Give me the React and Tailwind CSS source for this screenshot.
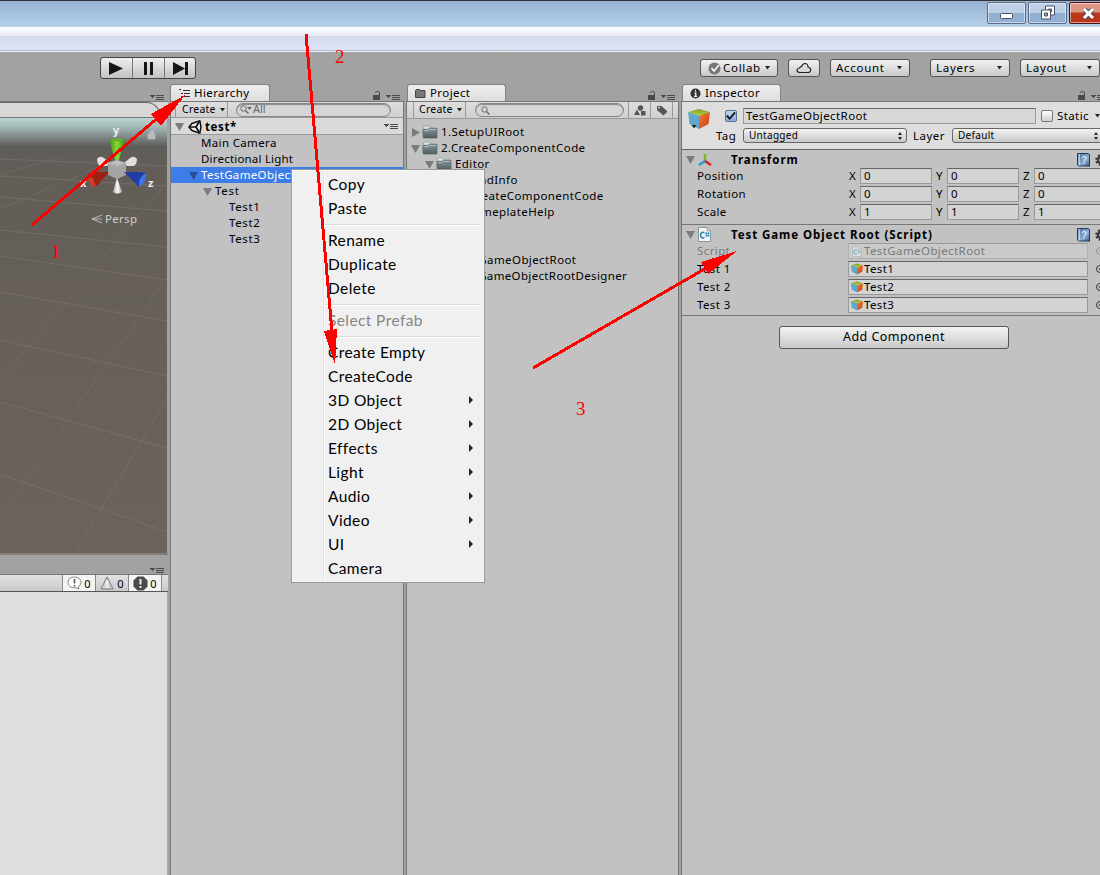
import { clsx } from "clsx";

const menuItems = [
  { label: "Copy" },
  { label: "Paste" },
  { sep: true },
  { label: "Rename" },
  { label: "Duplicate" },
  { label: "Delete" },
  { sep: true },
  { label: "Select Prefab", disabled: true },
  { sep: true },
  { label: "Create Empty" },
  { label: "CreateCode" },
  { label: "3D Object", sub: true },
  { label: "2D Object", sub: true },
  { label: "Effects", sub: true },
  { label: "Light", sub: true },
  { label: "Audio", sub: true },
  { label: "Video", sub: true },
  { label: "UI", sub: true },
  { label: "Camera" },
];

const transformRows = [
  { label: "Position", value: 0 },
  { label: "Rotation", value: 0 },
  { label: "Scale", value: 1 },
];

// ---------- icons ----------

function PanelMenuIcon({ className }) {
  return (
    <svg width="14" height="7" viewBox="0 0 14 7" className={clsx("shrink-0", className)} shapeRendering="crispEdges">
      <path d="M0 1h5L2.500 4z" fill="#4a4a4a" />
      <path d="M6 1.500h8M6 3.500h8M6 5.500h8" stroke="#4a4a4a" />
    </svg>
  );
}

function LockIcon({ color = "#4a4a4a", className }) {
  return (
    <svg width="8" height="9" viewBox="0 0 8 9" className={clsx("shrink-0", className)}>
      <path d="M2.500 2V1.200Q3 .5 4 .5h.8Q6.500.6 6.500 2v3" fill="none" stroke={color} />
      <rect x="0" y="4" width="7" height="5" fill={color} />
    </svg>
  );
}

function Foldout({ open = true, color = "#7b7b7b" }) {
  return (
    <svg width="9" height="9" viewBox="0 0 9 9" className="shrink-0">
      <path d={open ? "M0 1h9L4.500 9z" : "M1 0v9L9 4.500z"} fill={color} />
    </svg>
  );
}

function FolderIcon() {
  return (
    <svg width="16" height="14" viewBox="0 0 16 14" className="shrink-0">
      <defs>
        <linearGradient id="folder" x1="0" y1="0" x2="0" y2="1">
          <stop offset="0" stopColor="#87969a" />
          <stop offset="1" stopColor="#4c5b5e" />
        </linearGradient>
      </defs>
      <path d="M1.500 4V2L2.500 1h4l1 1.500h6V5z" fill="#dfe3e3" stroke="#8d9899" strokeWidth=".7" />
      <path d="M.7 4.500h5L7 3.500h8v9.500H1.200z" fill="url(#folder)" stroke="#56686b" strokeWidth=".7" />
      <path d="M1.500 5.500H6L7.500 4.500H14" stroke="#b9c3c4" strokeWidth=".8" fill="none" />
    </svg>
  );
}

function CubeIcon({ size, className }) {
  return (
    <svg width={size} height={size} viewBox="0 0 22 22" className={clsx("shrink-0", className)}>
      <defs>
        <linearGradient id="cubeRight" x1="0" y1="0" x2="1" y2="1">
          <stop offset="0" stopColor="#f0803a" />
          <stop offset="1" stopColor="#c93a10" />
        </linearGradient>
        <linearGradient id="cubeTop" x1="0" y1="0" x2="0" y2="1">
          <stop offset="0" stopColor="#7f9a28" />
          <stop offset="1" stopColor="#b5d84a" />
        </linearGradient>
      </defs>
      <path d="M0 4L11 7v14L1.500 16z" fill="#62a8cc" />
      <path d="M22 4L11 7v14l9.500-5z" fill="url(#cubeRight)" />
      <path d="M0 4L11 1 22 4 11 8z" fill="url(#cubeTop)" />
    </svg>
  );
}

function ScriptIcon({ className }) {
  return (
    <svg width="13" height="15" viewBox="0 0 13 15" className={clsx("shrink-0", className)}>
      <path d="M.5.5h8.500l3.500 3.500v10.500H.5z" fill="#f3f6f7" stroke="#8b9498" />
      <path d="M9 .5V4h3.500" fill="#cfd6d8" stroke="#8b9498" strokeWidth=".7" />
      <path d="M6.500 5.700Q3 4.200 2.500 8q.3 3.800 4 2.500" fill="none" stroke="#2a86b4" strokeWidth="1.600" />
      <path d="M8.400 5v5M10.400 5v5M7.200 6.500h4.300M7.200 8.700h4.300" stroke="#2a86b4" strokeWidth=".8" />
    </svg>
  );
}

function HelpIcon() {
  return (
    <svg width="13" height="14" viewBox="0 0 13 14" className="shrink-0">
      <defs>
        <linearGradient id="book" x1="0" y1="0" x2="1" y2="1">
          <stop offset="0" stopColor="#4a6f9f" />
          <stop offset=".6" stopColor="#8fb0d8" />
          <stop offset="1" stopColor="#34527d" />
        </linearGradient>
      </defs>
      <path d="M.5.5H11l1.500 1v12l-1-.5H2L.5 12z" fill="url(#book)" stroke="#233b60" />
      <path d="M2.200 1v11.500" stroke="#dce8f5" />
      <path d="M5.500 5q0-1.500 1.800-1.500T9 5q0 1-1.700 2v.8M7.300 9v1.300" fill="none" stroke="#fff" strokeWidth="1" />
    </svg>
  );
}

function GearIcon() {
  return (
    <svg width="12" height="12" viewBox="0 0 12 12" className="shrink-0">
      <circle cx="6" cy="6" r="3" fill="none" stroke="#333" strokeWidth="2" />
      <circle cx="6" cy="6" r="4.800" fill="none" stroke="#333" strokeWidth="2" strokeDasharray="2 1.770" />
    </svg>
  );
}

function SearchIcon({ arrow }) {
  return (
    <svg width="13" height="9" viewBox="0 0 13 9" className="shrink-0">
      <circle cx="3.500" cy="3.500" r="2.700" fill="none" stroke="#6a6a6a" />
      <path d="M5.500 5.500L8.500 8.500" stroke="#6a6a6a" strokeWidth="1.400" />
      {arrow && <path d="M7 2h5L9.500 5z" fill="#6a6a6a" />}
    </svg>
  );
}

function UnityIcon() {
  return (
    <svg width="14" height="14" viewBox="0 0 14 14" className="shrink-0">
      <path d="M1 7L4 3.500 11.800.9 13 7l-1.200 6.100L4 10.500z" fill="#eee" stroke="#111" strokeWidth="1.500" />
      <path d="M1 7h7M8 7l3.500-6M8 7l3.500 6" stroke="#111" strokeWidth="1.700" fill="none" />
    </svg>
  );
}

function Caret({ className }) {
  return (
    <svg width="5" height="4" viewBox="0 0 5 4" className={clsx("shrink-0", className)}>
      <path d="M0 0h5L2.500 3.500z" fill="#222" />
    </svg>
  );
}

function UpDown() {
  return (
    <svg width="4" height="8" viewBox="0 0 4 8" className="shrink-0">
      <path d="M0 3L2 0l2 3zM0 5l2 3 2-3z" fill="#222" />
    </svg>
  );
}

// ---------- building blocks ----------

function ToolbarButton({ small, className, children }) {
  return (
    <div
      className={clsx(
        "flex shrink-0 items-center rounded-[3px] border bg-linear-to-b from-[#f2f2f2] to-[#c9c9c9]",
        small ? "h-[15px] border-[#666] text-[10px] tracking-[0.3px]" : "h-[18px] border-[#555] text-[11.5px] tracking-[0.7px]",
        className
      )}
    >
      {children}
    </div>
  );
}

function Tab({ icon, label, className }) {
  return (
    <div className={clsx("flex h-[17px] shrink-0 items-center rounded-t-[3px] border border-b-0 border-[#828282] bg-linear-to-b from-[#ededed] to-[#dedede] text-[11.5px] tracking-[0.4px]", className)}>
      {icon}
      {label}
    </div>
  );
}

function PanelTools({ className }) {
  return (
    <div className={clsx("ml-auto flex h-full items-end", className)}>
      <LockIcon className="mr-[5px] mb-[1px]" />
      <PanelMenuIcon />
    </div>
  );
}

function SearchField({ className, children }) {
  return (
    <div className={clsx("flex h-[14px] shrink-0 items-center rounded-full border border-[#858585] bg-[#d5d5d5] shadow-[inset_0_1px_1px_#888]", className)}>
      {children}
    </div>
  );
}

function NumberField({ axis, value, className }) {
  return (
    <div className={clsx("flex shrink-0 items-center", className)}>
      <span className="w-[11px] shrink-0">{axis}</span>
      <span className="h-[16px] w-[72px] shrink-0 border border-[#999] border-t-[#666] bg-[#d3d3d3] pl-[3px] leading-[14px]">{value}</span>
    </div>
  );
}

function ObjectField({ label, value, script }) {
  return (
    <div className={clsx("flex h-[18px] items-center", script && "text-[#7a7a7a]")}>
      <span className="w-[151px] shrink-0">{label}</span>
      <div className={clsx("flex h-[16px] w-[240px] shrink-0 items-center gap-[1px] border pl-[2px]", script ? "border-[#b0b0b0] border-t-[#999] bg-[#cacaca]" : "border-[#999] border-t-[#666] bg-[#d3d3d3]")}>
        {script ? <ScriptIcon className="h-[11px] w-[12px] opacity-40" /> : <CubeIcon size={12} />}
        <span>{value}</span>
      </div>
      <svg width="10" height="10" viewBox="0 0 10 10" className="ml-[7px] shrink-0">
        <circle cx="5" cy="5" r="3.500" fill="none" stroke={script ? "#999" : "#333"} />
        <circle cx="5" cy="5" r="1" fill={script ? "#999" : "#333"} />
      </svg>
    </div>
  );
}

// ---------- window chrome ----------

function TitleBar() {
  const btn = "flex h-[22px] w-[39px] shrink-0 items-center justify-center rounded-[2px] border shadow-[inset_0_0_0_1px_rgba(255,255,255,0.5)]";
  const blue = "border-[#5b6c8a] bg-linear-to-b from-[#bdd0e6] from-50% to-[#92aed0] to-50%";
  return (
    <div className="shrink-0">
      <div className="flex h-[27px] justify-end gap-[2px] overflow-hidden border-t border-[#333] bg-linear-to-b from-[#95b1d1] to-[#b7d1ea] pt-[1px]">
        <div className={clsx(btn, blue)}>
          <svg width="14" height="6" className="mt-[5px]"><rect x=".5" y=".5" width="12" height="5" rx="1" fill="#fff" stroke="#4a5364" /></svg>
        </div>
        <div className={clsx(btn, blue)}>
          <svg width="16" height="16" viewBox="0 0 16 16">
            <path d="M5.500 1h9v9h-9z" fill="#fff" stroke="#4a5364" />
            <path d="M8.500 4h3v3h-3z" fill="#a9bdd8" stroke="#4a5364" />
            <path d="M1.500 5h9v9h-9z" fill="#fff" stroke="#4a5364" />
            <path d="M4.500 8h3v3h-3z" fill="#92aed0" stroke="#4a5364" />
          </svg>
        </div>
        <div className={clsx(btn, "-mr-[8px] border-[#4d1218] bg-linear-to-b from-[#dd9483] from-45% to-[#b9351c] to-50%")}>
          <svg width="15" height="13" viewBox="0 0 15 13">
            <path d="M3.500 2.500l8 8M11.500 2.500l-8 8" stroke="#4a5364" strokeWidth="5" />
            <path d="M3 2l9 9M12 2l-9 9" stroke="#fff" strokeWidth="3" />
          </svg>
        </div>
      </div>
      <div className="h-[9px] bg-linear-to-b from-white to-[#e7eaf4]" />
      <div className="h-[14px] bg-linear-to-b from-[#d3d9ed] to-[#dfe3f4]" />
      <div className="h-px bg-[#b5b9cc]" />
      <div className="h-px bg-[#eee]" />
    </div>
  );
}

function Toolbar() {
  return (
    <div className="flex h-[32px] shrink-0 bg-[#a2a2a2]">
      <div className="mt-[5px] ml-[100px] flex h-[22px] w-[96px] shrink-0 rounded-[3px] border border-[#444] bg-linear-to-b from-[#efefef] to-[#c2c2c2]">
        <svg width="94" height="20" viewBox="0 0 94 20">
          <path d="M31.500 0v20M63.500 0v20" stroke="#777" />
          <path d="M8 4v13l14-6.500z" fill="#151515" />
          <path d="M43 4h3v13h-3zM49 4h3v13h-3z" fill="#151515" />
          <path d="M72 4v13l12-6.500zM84 4h3v13h-3z" fill="#151515" />
        </svg>
      </div>
      <div className="mt-[7px] ml-auto flex">
        <ToolbarButton className="mr-[10px] w-[78px] pl-[7px]">
          <svg width="13" height="13" viewBox="0 0 13 13" className="mr-[2px] shrink-0">
            <circle cx="6.500" cy="6.500" r="6" fill="#777" />
            <path d="M3.500 6l2.500 3 5-6" fill="none" stroke="#fff" strokeWidth="1.500" />
          </svg>
          Collab
          <Caret className="mr-[7px] ml-auto" />
        </ToolbarButton>
        <ToolbarButton className="mr-[10px] w-[32px] justify-center">
          <svg width="16" height="12" viewBox="0 0 16 12">
            <path d="M3.500 10.500Q.8 10 1 8q.3-2 2.500-2Q4 4.500 5.500 4.700 6.500 1.500 9 1.500q3 .2 3 3.500 2.700.5 2.700 3 0 2-2 2.500z" fill="none" stroke="#222" strokeWidth="1.200" />
          </svg>
        </ToolbarButton>
        <ToolbarButton className="mr-[20px] w-[80px] justify-between pr-[7px] pl-[5px]">Account<Caret /></ToolbarButton>
        <ToolbarButton className="mr-[10px] w-[80px] justify-between pr-[7px] pl-[5px]">Layers<Caret /></ToolbarButton>
        <ToolbarButton className="w-[80px] justify-between pr-[7px] pl-[5px]">Layout<Caret /></ToolbarButton>
      </div>
    </div>
  );
}

// ---------- scene view ----------

function SceneGrid() {
  return (
    <svg width="167" height="435" viewBox="0 0 167 435" className="shrink-0">
      <defs>
        <linearGradient id="sky" x1="0" y1="0" x2="0" y2="1">
          <stop offset="0" stopColor="#bcd4d3" />
          <stop offset=".02" stopColor="#a5b9b9" />
          <stop offset=".045" stopColor="#7d8685" />
          <stop offset=".065" stopColor="#5f5d5a" />
          <stop offset=".12" stopColor="#635d58" />
          <stop offset="1" stopColor="#6b635d" />
        </linearGradient>
        <linearGradient id="whiteCone" x1="0" y1="0" x2="1" y2="0">
          <stop offset="0" stopColor="#a9a9ab" />
          <stop offset=".5" stopColor="#fafafa" />
          <stop offset="1" stopColor="#a9a9ab" />
        </linearGradient>
        <linearGradient id="greenCone" x1="0" y1="0" x2="1" y2="0">
          <stop offset="0" stopColor="#3f8a12" />
          <stop offset=".5" stopColor="#86dc38" />
          <stop offset="1" stopColor="#3f8a12" />
        </linearGradient>
      </defs>
      <rect width="167" height="435" fill="url(#sky)" />
      <g fill="none" stroke="#8b857f" strokeOpacity=".4">
        <path d="M0 41L167 48M0 58L167 68M0 79L167 93M0 112L167 129M0 138L167 162M0 174L167 203M0 222L167 258M0 284L167 330M0 356L167 414" />
        <path d="M60 40L0 56M115 42L0 91M167 65L0 262M167 159L0 400M167 280L75 435" strokeOpacity=".3" />
      </g>
      <g>
        <path d="M97 41q3-4 7-1l6 5-3 3-7 0q-3-2-3-7zM137 41q-3-4-7-1l-6 5 3 3 7 0q3-2 3-7z" fill="#dedede" />
        <path d="M108 45l9-3 9 3v12l-9 4-9-4z" fill="#a5a5a7" />
        <path d="M108 45l9-3 9 3-9 3z" fill="#bdbdbf" />
        <path d="M109 22q8-3 16 0l-6 20h-4z" fill="url(#greenCone)" />
        <path d="M109 22q8-3 16 0-8 3-16 0z" fill="#5fb321" />
        <path d="M88 56l5-2 16 0-12 14-4-1q-5-4-5-11z" fill="#9a2113" />
        <path d="M88 57q5 0 8 11l-3 1q-5-4-5-12z" fill="#cc3d2a" />
        <path d="M124 54h16l6 1-7 14z" fill="#1f3fa6" />
        <path d="M146 55q1 9-7 14-1-10 7-14z" fill="#3f76ee" />
        <path d="M117 60l5 14q-5 3-9 0z" fill="url(#whiteCone)" />
        <path d="M102 94l-10 4 10 4M92 98h10" fill="none" stroke="#cfcfcf" strokeWidth=".8" transform="translate(0 3)" />
        <path d="M148 16h7v5h-7zM150 16v-3h4v3" fill="#bdbdbd" stroke="#bdbdbd" strokeWidth=".6" />
      </g>
      <g fontFamily="Noto Sans" fontWeight="bold" fontSize="11" fill="#eee">
        <text x="113" y="16">y</text>
        <text x="80" y="69">x</text>
        <text x="148" y="69">z</text>
      </g>
      <text x="105" y="105" fontFamily="Noto Sans" fontSize="11.500" letterSpacing=".3" fill="#cfcfcf">Persp</text>
    </svg>
  );
}

function ScenePanel() {
  return (
    <div className="flex w-[168px] shrink-0 flex-col">
      <div className="flex h-[17px] shrink-0 items-end justify-end pr-[4px]"><PanelMenuIcon /></div>
      <div className="h-[17px] shrink-0 border-y border-[#777] bg-[#d8d8d8] pr-[8px]">
        <div className="h-[13px] rounded-tr-full border-t border-r border-[#666]" />
      </div>
      <SceneGrid />
      <div className="h-[2px] shrink-0 bg-[#85807b]" />
      <div className="flex h-[19px] shrink-0 items-end justify-end bg-[#a2a2a2] pr-[4px]"><PanelMenuIcon /></div>
      <div className="flex h-[18px] shrink-0 justify-end border-y border-[#777] border-b-[#555] bg-linear-to-b from-[#e2e2e2] to-[#c9c9c9] pr-[6px] text-[11px] leading-[17px]">
        <div className="flex w-[33px] items-center justify-center gap-[2px] border-l border-[#888] bg-[#f4f4f4]">
          <svg width="15" height="14" viewBox="0 0 15 14">
            <path d="M7.500 1Q14 1.500 14 6.500q-.2 3-3 4.500l1 2-3.500-1.300Q1 12 1 6.500 1.500 1 7.500 1z" fill="#fff" stroke="#888" />
            <path d="M7.500 3v4.500M7.500 9v1.500" stroke="#555" strokeWidth="1.600" />
          </svg>0
        </div>
        <div className="flex w-[33px] items-center justify-center gap-[3px] border-l border-[#888]">
          <svg width="14" height="14" viewBox="0 0 14 14">
            <path d="M7 1l6 12H1z" fill="#d5d5d5" stroke="#777" strokeLinejoin="round" />
            <path d="M7 4.500V9M7 10v1.500" stroke="#fff" strokeWidth="1.600" />
          </svg>0
        </div>
        <div className="flex w-[34px] items-center justify-center gap-[2px] border-x border-[#888] bg-[#f4f4f4]">
          <svg width="15" height="15" viewBox="0 0 15 15">
            <path d="M4.500.5h6l4 4v6l-4 4h-6l-4-4v-6z" fill="#4a4a4a" />
            <path d="M7.500 3v5.500M7.500 10v2" stroke="#eee" strokeWidth="2" />
          </svg>0
        </div>
      </div>
      <div className="flex-1 border-r border-[#aaa] bg-[#dedede]" />
    </div>
  );
}

// ---------- hierarchy ----------

function HierarchyPanel() {
  const row = "flex h-[16px] items-center gap-[3px]";
  return (
    <div className="ml-[2px] flex w-[234px] shrink-0 flex-col">
      <div className="flex h-[17px] shrink-0">
        <Tab
          className="w-[100px] gap-[3px] pl-[8px]"
          label="Hierarchy"
          icon={
            <svg width="12" height="9" viewBox="0 0 12 9" shapeRendering="crispEdges">
              <path d="M0 .5h2M4 1.500h7M2 4.500h2M5 4.500h6M2 7.500h2M5 7.500h6" stroke="#333" />
            </svg>
          }
        />
        <PanelTools className="pr-[4px]" />
      </div>
      <div className="flex flex-1 flex-col border-x border-t border-[#777] bg-[#c2c2c2]">
        <div className="flex h-[16px] shrink-0 items-center border-b border-[#999] bg-linear-to-b from-[#dedede] to-[#cfcfcf] pl-[4px]">
          <div className="flex h-full w-[53px] items-center gap-[4px] border-x border-[#999] pl-[6px] text-[10.5px] tracking-[0.25px]">
            Create<Caret />
          </div>
          <SearchField className="ml-[8px] w-[155px] gap-0 pl-[3px] text-[11px] text-[#666]">
            <SearchIcon arrow />All
          </SearchField>
        </div>
        <div className="flex h-[17px] shrink-0 items-center border-b border-[#999] bg-[#dadada] pt-px pr-[5px] pl-[4px] text-[11.5px] font-bold tracking-[0.6px]">
          <Foldout />
          <div className="ml-[4px]"><UnityIcon /></div>
          <span className="ml-[3px]">test*</span>
          <PanelMenuIcon className="ml-auto" />
        </div>
        <div className="text-[11.5px] tracking-[0.35px]">
          <div className={clsx(row, "pl-[30px]")}>Main Camera</div>
          <div className={clsx(row, "pl-[30px] tracking-[0.2px]")}>Directional Light</div>
          <div className={clsx(row, "bg-[#3d7de7] pl-[18px] text-white")}><Foldout color="#274f94" />TestGameObjectRoot</div>
          <div className={clsx(row, "pl-[32px] tracking-[0.7px]")}><Foldout />Test</div>
          <div className={clsx(row, "pl-[58px] tracking-[0.6px]")}>Test1</div>
          <div className={clsx(row, "pl-[58px] tracking-[0.6px]")}>Test2</div>
          <div className={clsx(row, "pl-[58px] tracking-[0.6px]")}>Test3</div>
        </div>
      </div>
    </div>
  );
}

// ---------- project ----------

function ProjectPanel() {
  const row = "flex h-[16px] items-center gap-[2px]";
  return (
    <div className="ml-[2px] flex w-[273px] shrink-0 flex-col">
      <div className="flex h-[17px] shrink-0">
        <Tab
          className="ml-px w-[99px] gap-[4px] pl-[7px]"
          label="Project"
          icon={
            <svg width="11" height="9" viewBox="0 0 11 9">
              <path d="M.5 1.500L1.500.5h3l1 1h4.500v7H.5z" fill="#777" stroke="#444" />
            </svg>
          }
        />
        <PanelTools className="pr-[4px]" />
      </div>
      <div className="flex flex-1 flex-col border-x border-t border-[#777] bg-[#c2c2c2]">
        <div className="flex h-[17px] shrink-0 items-center border-b border-[#999] bg-linear-to-b from-[#dedede] to-[#cfcfcf] pl-[6px]">
          <div className="flex h-full w-[53px] items-center gap-[4px] border-x border-[#999] pl-[5px] text-[10.5px] tracking-[0.25px]">
            Create<Caret />
          </div>
          <SearchField className="ml-[9px] w-[149px] pl-[5px]"><SearchIcon /></SearchField>
          <div className="ml-[4px] flex h-full w-[23px] items-center justify-center border-x border-[#999]">
            <svg width="12" height="11" viewBox="0 0 12 11">
              <path d="M0 10L3 4.500 6 10z" fill="#555" />
              <circle cx="6.500" cy="3" r="2.700" fill="#555" />
              <rect x="7" y="6" width="4.500" height="4.500" fill="#555" />
            </svg>
          </div>
          <div className="flex h-full w-[22px] items-center justify-center border-r border-[#999]">
            <svg width="12" height="11" viewBox="0 0 12 11">
              <path d="M1 1h4.500L11.500 6.500 7.500 10.500 1 5z" fill="#555" />
              <circle cx="3" cy="2.700" r=".9" fill="#ddd" />
            </svg>
          </div>
        </div>
        <div className="pt-[5px] text-[11.5px] tracking-[0.4px]">
          <div className={clsx(row, "pl-[4px]")}><Foldout open={false} /><FolderIcon /><span className="pl-px">1.SetupUIRoot</span></div>
          <div className={clsx(row, "pl-[4px]")}><Foldout /><FolderIcon /><span className="pl-px">2.CreateComponentCode</span></div>
          <div className={clsx(row, "pl-[18px]")}><Foldout /><FolderIcon /><span className="pl-px">Editor</span></div>
          <div className={clsx(row, "pl-[61px]")}>BindInfo</div>
          <div className={clsx(row, "pl-[62px]")}>CreateComponentCode</div>
          <div className={clsx(row, "pl-[58px]")}>NameplateHelp</div>
          <div className="h-[32px]" />
          <div className={clsx(row, "pl-[48px]")}>TestGameObjectRoot</div>
          <div className={clsx(row, "pl-[48px] tracking-[0.35px]")}>TestGameObjectRootDesigner</div>
        </div>
      </div>
    </div>
  );
}

// ---------- inspector ----------

function InspectorPanel() {
  return (
    <div className="ml-[2px] flex w-[419px] shrink-0 flex-col overflow-hidden">
      <div className="flex h-[17px] shrink-0">
        <Tab
          className="ml-px w-[99px] gap-[4px] pl-[7px]"
          label="Inspector"
          icon={
            <svg width="11" height="11" viewBox="0 0 11 11">
              <circle cx="5.500" cy="5.500" r="5" fill="#333" />
              <path d="M5.500 2v1.500M4.300 5h1.500v3M4 8.300h3" stroke="#fff" strokeWidth="1.200" fill="none" />
            </svg>
          }
        />
        <PanelTools className="-mr-[5px]" />
      </div>
      <div className="flex flex-1 flex-col border-t border-l border-[#777] bg-[#c2c2c2] text-[11.5px] tracking-[0.4px]">
        <div className="flex h-[48px] shrink-0 border-b border-[#666] bg-[#dedede] pt-[4px] pl-[6px]">
          <div className="w-[27px] shrink-0">
            <CubeIcon size={22} className="mt-[2px]" />
            <Caret className="-mt-[5px] ml-[2px] w-[8px]" />
          </div>
          <div className="ml-px shrink-0">
            <div className="flex h-[19px] items-center">
              <div className="ml-[9px] flex h-[12px] w-[12px] items-center justify-center rounded-[2px] border border-[#5c6f8c] bg-linear-to-b from-[#c4d6ee] to-[#86aadc]">
                <svg width="11" height="10" viewBox="0 0 11 10"><path d="M1 4.500L4 8l6-7" fill="none" stroke="#111" strokeWidth="2" /></svg>
              </div>
              <div className="ml-[6px] h-[16px] w-[293px] border border-[#999] border-t-[#666] bg-[#d8d8d8] pl-[2px] leading-[14px]">TestGameObjectRoot</div>
              <div className="ml-[5px] h-[12px] w-[12px] rounded-[2px] border border-[#777] bg-linear-to-b from-white to-[#d0d0d0]" />
              <span className="ml-[4px]">Static</span>
              <Caret className="ml-[5px] w-[7px]" />
            </div>
            <div className="mt-px flex h-[19px] items-center">
              <span className="w-[27px]">Tag</span>
              <ToolbarButton small className="w-[164px] justify-between pr-[4px] pl-[5px]">Untagged<UpDown /></ToolbarButton>
              <span className="ml-[6px] w-[39px] tracking-[0.5px]">Layer</span>
              <ToolbarButton small className="w-[151px] justify-between pr-[4px] pl-[5px]">Default<UpDown /></ToolbarButton>
            </div>
          </div>
        </div>

        <div className="h-[75px] shrink-0 border-b border-[#777]">
          <div className="flex h-[17px] items-center pt-[2px] pl-[4px]">
            <Foldout />
            <svg width="16" height="14" viewBox="0 0 16 14" className="ml-[2px]">
              <path d="M8 8V1" stroke="#7cba22" strokeWidth="2.500" />
              <path d="M8 8L2 12" stroke="#2a9bd0" strokeWidth="2.500" />
              <path d="M8 8l6 4" stroke="#cf2323" strokeWidth="2.500" />
            </svg>
            <b className="ml-[18px] tracking-[0.95px]">Transform</b>
            <div className="mr-[-7px] ml-auto flex items-center gap-[5px]"><HelpIcon /><GearIcon /></div>
          </div>
          {transformRows.map(({ label, value }) => (
            <div key={label} className="flex h-[18px] items-center pl-[15px]">
              <span className="w-[152px] shrink-0">{label}</span>
              <NumberField axis="X" value={value} />
              <NumberField axis="Y" value={value} className="ml-[4px]" />
              <NumberField axis="Z" value={value} className="ml-[4px]" />
            </div>
          ))}
        </div>

        <div className="h-[91px] shrink-0 border-b border-[#777]">
          <div className="flex h-[17px] items-center pt-[2px] pl-[4px]">
            <Foldout />
            <ScriptIcon className="ml-[3px]" />
            <b className="ml-[20px] tracking-[0.92px]">Test Game Object Root (Script)</b>
            <div className="mr-[-7px] ml-auto flex items-center gap-[5px]"><HelpIcon /><GearIcon /></div>
          </div>
          <div className="pl-[15px]">
            <ObjectField label="Script" value="TestGameObjectRoot" script />
            <ObjectField label="Test 1" value="Test1" />
            <ObjectField label="Test 2" value="Test2" />
            <ObjectField label="Test 3" value="Test3" />
          </div>
        </div>

        <div className="mt-[10px] ml-[97px] h-[23px] w-[230px] rounded-[3px] border border-[#555] bg-linear-to-b from-[#f3f3f3] to-[#c9c9c9] text-center text-[12.5px] leading-[19px] tracking-[0.45px]">
          Add Component
        </div>
      </div>
    </div>
  );
}

// ---------- things floating over the editor ----------

function ContextMenu() {
  return (
    <div className="absolute top-[169px] left-[291px] h-[414px] w-[194px] border border-[#979797] bg-[#f0f0f0] p-[3px] font-['Lato',sans-serif] text-[15.5px] tracking-[0.4px] shadow-[inset_0_0_0_1px_#f7f7f7]">
      <div className="ml-[28px] h-full border-l border-[#e0e0e0] shadow-[inset_1px_0_0_#fff]">
        {menuItems.map((item, i) =>
          item.sep ? (
            <div key={i} className="flex h-[8px] items-center"><div className="ml-px h-[2px] w-full border-t border-[#dcdcdc] bg-white" /></div>
          ) : (
            <div key={i} className={clsx("flex h-[24px] items-center justify-between pr-[8px] pl-[4px]", item.disabled && "text-[#858585]")}>
              <span>{item.label}</span>
              {item.sub && <svg width="4" height="8" viewBox="0 0 4 8" className="-mt-[2px]"><path d="M0 0l4 4-4 4z" fill="#222" /></svg>}
            </div>
          )
        )}
      </div>
    </div>
  );
}

function Annotations() {
  return (
    <svg width="1100" height="875" className="absolute top-0 left-0">
      <g stroke="#f00" strokeWidth="3" shapeRendering="crispEdges">
        <path d="M32 225L160 116M306 34L332 332M533 368L708 267" />
      </g>
      <g fill="#f00" shapeRendering="crispEdges">
        <path d="M185 95L151 114l10 12zM335 365L324 331l13-2zM737 251L701 262l7 12z" />
      </g>
      <g fill="#f00" fontFamily="Liberation Serif" fontSize="19">
        <text x="51" y="258">1</text>
        <text x="335" y="63">2</text>
        <text x="576" y="415">3</text>
      </g>
    </svg>
  );
}

export default function App() {
  return (
    <div className="relative flex h-[875px] w-[1100px] flex-col overflow-hidden bg-[#a2a2a2] font-['Noto_Sans',sans-serif] whitespace-nowrap text-black">
      <TitleBar />
      <Toolbar />
      <div className="flex min-h-0 flex-1">
        <ScenePanel />
        <HierarchyPanel />
        <ProjectPanel />
        <InspectorPanel />
      </div>
      <ContextMenu />
      <Annotations />
    </div>
  );
}
